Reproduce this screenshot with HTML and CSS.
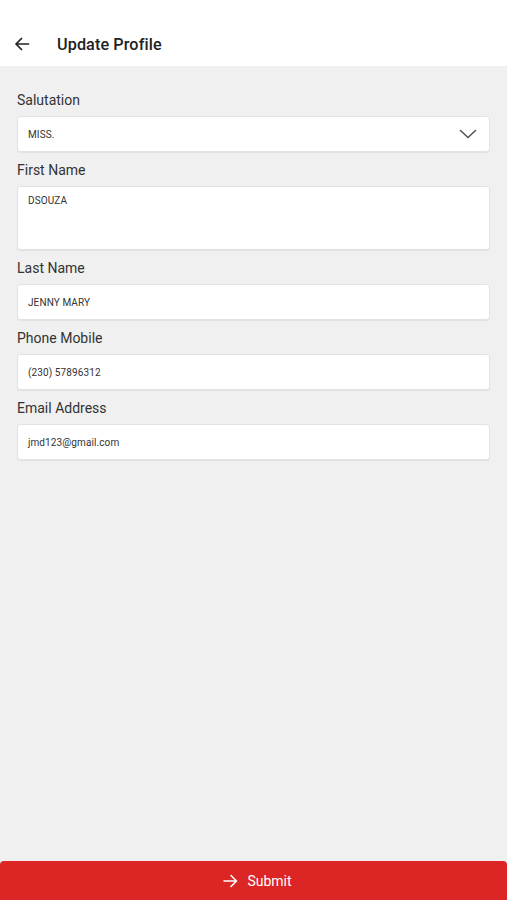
FILE: index.html
```html
<!DOCTYPE html>
<html lang="en">
<head>
<meta charset="utf-8">
<title>Update Profile</title>
<link rel="stylesheet" href="styles.css">
</head>
<body>
<div class="app">
  <header class="topbar">
    <svg class="back" width="16" height="16" viewBox="0 0 16 16" aria-hidden="true">
      <path d="M14.5 8H2M7.5 2.5L2 8l5.5 5.5" fill="none" stroke="#222" stroke-width="1.7" stroke-linecap="round" stroke-linejoin="round"/>
    </svg>
    <h1 class="title">Update Profile</h1>
  </header>
  <main class="form">
    <div class="field">
      <label class="label">Salutation</label>
      <div class="box select">
        <span class="value">MISS.</span>
        <svg class="chev" width="18" height="10" viewBox="0 0 18 10" aria-hidden="true">
          <path d="M1.5 1.5L9 8.5l7.5-7" fill="none" stroke="#555" stroke-width="1.6" stroke-linecap="round" stroke-linejoin="round"/>
        </svg>
      </div>
    </div>
    <div class="field">
      <label class="label">First Name</label>
      <div class="box area"><span class="value">DSOUZA</span></div>
    </div>
    <div class="field">
      <label class="label">Last Name</label>
      <div class="box"><span class="value">JENNY MARY</span></div>
    </div>
    <div class="field">
      <label class="label">Phone Mobile</label>
      <div class="box"><span class="value">(230) 57896312</span></div>
    </div>
    <div class="field">
      <label class="label">Email Address</label>
      <div class="box"><span class="value">jmd123@gmail.com</span></div>
    </div>
  </main>
  <button class="submit" type="button">
    <svg width="15" height="14" viewBox="0 0 15 14" aria-hidden="true">
      <path d="M1 7h12.5M8 1.5L13.5 7 8 12.5" fill="none" stroke="#fff" stroke-width="1.6" stroke-linecap="round" stroke-linejoin="round"/>
    </svg>
    <span>Submit</span>
  </button>
</div>
</body>
</html>
```
FILE: styles.css
```css
* { box-sizing: border-box; }
html, body { margin: 0; padding: 0; }
body {
  font-family: Roboto, "Liberation Sans", Arial, sans-serif;
  background: #f0f0f0;
  color: #333;
}
.app {
  height: 900px;
  display: flex;
  flex-direction: column;
}
.topbar {
  height: 66px;
  background: #fff;
  display: flex;
  align-items: center;
  padding: 22px 0 0 14px;
  flex: none;
}
.back { display: block; margin-top: 0; }
.title {
  margin: 0 0 0 27px;
  font-size: 16.2px;
  font-weight: 500;
  color: #222;
  letter-spacing: 0.1px;
}
.form {
  flex: 1;
  padding: 24px 17px 0 17px;
  display: flex;
  flex-direction: column;
  gap: 8px;
}
.field {
  display: flex;
  flex-direction: column;
  gap: 6px;
}
.label {
  font-size: 14px;
  line-height: 20px;
  color: #333;
}
.box {
  background: #fff;
  border: 1px solid #e3e3e3;
  border-radius: 3px;
  box-shadow: 0 1px 1px rgba(0,0,0,0.06);
  height: 36px;
  display: flex;
  align-items: center;
  padding: 0 10px;
}
.box.area {
  height: 64px;
  align-items: flex-start;
  padding-top: 8px;
}
.value {
  font-size: 10px;
  color: #333;
  letter-spacing: 0.1px;
}
.select { justify-content: space-between; padding-right: 12px; }
.chev { display: block; }
.submit {
  flex: none;
  height: 39px;
  border: none;
  border-radius: 4px 4px 0 0;
  background: #dc2626;
  color: #fff;
  font-family: inherit;
  font-size: 14px;
  display: flex;
  align-items: center;
  justify-content: center;
  gap: 9px;
  padding: 0 0 0 8px;
}
.submit svg { display: block; }
```
